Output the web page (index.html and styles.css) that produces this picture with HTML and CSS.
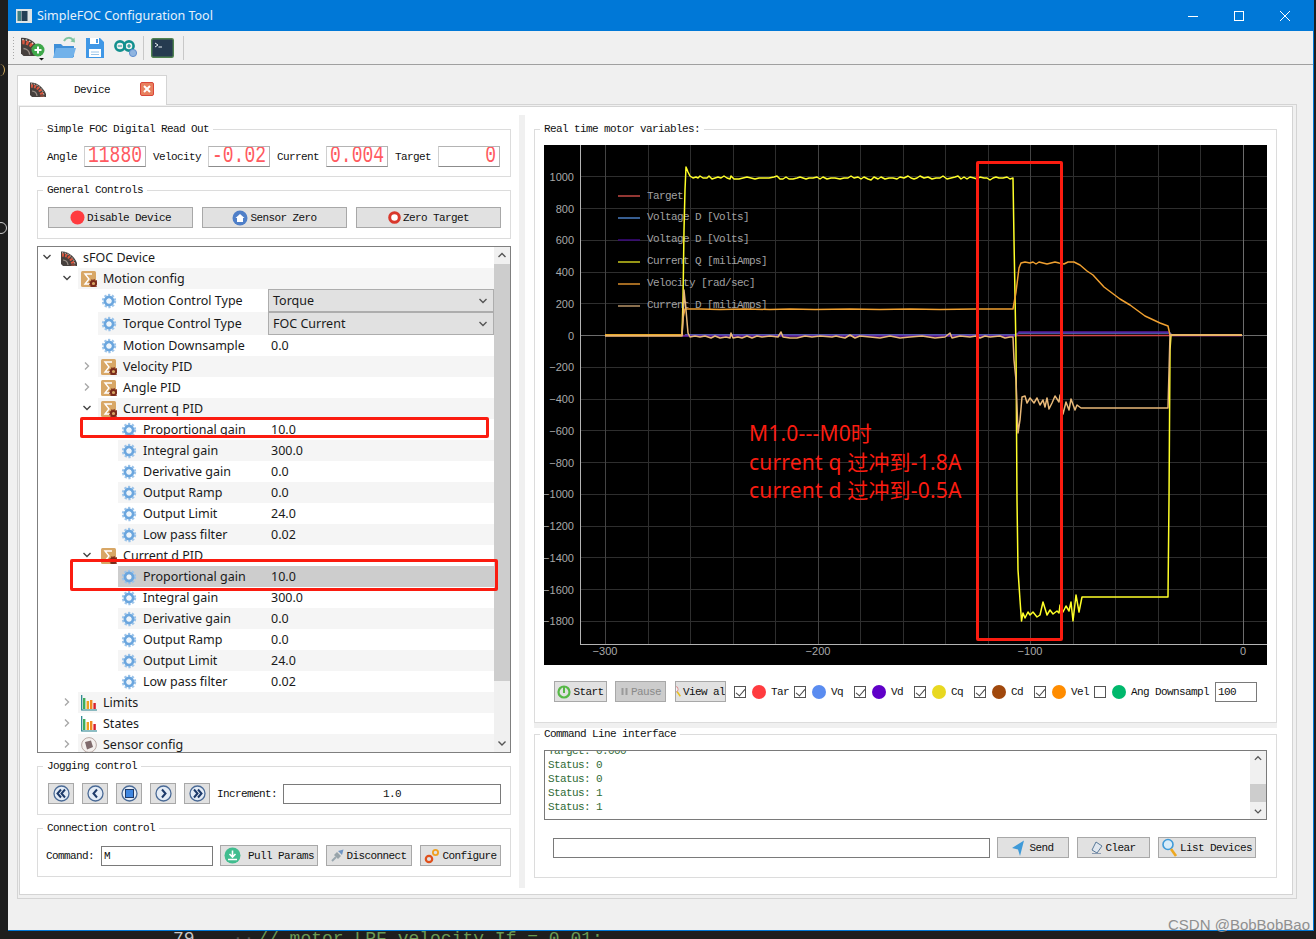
FILE: index.html

```html
<!DOCTYPE html>
<html lang="en">
<head>
  <meta charset="UTF-8">
  <meta name="viewport" content="width=device-width, initial-scale=1.0">
  <title>SimpleFOC Configuration Tool</title>
  <link rel="stylesheet" href="styles.css">
</head>
<body>
  <!-- Shared icons -->
  <svg class="defs" width="0" height="0">
    <symbol id="i-dial" viewBox="0 0 16 16">
      <path d="M0 1.5 C7 1 13 6 16 13 V16 H2 L0 14 Z" fill="#46403d"/>
      <path d="M1 5 A10.5 10.5 0 0 1 12 15.5" fill="none" stroke="#d9573f" stroke-width="3.4" stroke-dasharray="2 1.2"/>
      <path d="M1 2.8 A13 13 0 0 1 14 15.5" fill="none" stroke="#e6dcd2" stroke-width="1" stroke-dasharray="1.2 1.6"/>
      <path d="M2 10 A5.5 5.5 0 0 1 7 15" fill="none" stroke="#9a8f88" stroke-width="1.2"/>
    </symbol>
    <symbol id="i-sum" viewBox="0 0 16 16">
      <rect width="15" height="16" rx="1.5" fill="#d8a766"/>
      <polyline points="11,3 4,3 8,8 4,13 11,13" fill="none" stroke="#fff" stroke-width="1.4"/>
      <circle cx="12.5" cy="12.5" r="2.6" fill="none" stroke="#7a2a1a" stroke-width="2"/>
      <circle cx="12.5" cy="12.5" r="3.8" fill="none" stroke="#7a2a1a" stroke-width="1.2" stroke-dasharray="1.4 1.1"/>
    </symbol>
    <symbol id="i-gear" viewBox="0 0 16 16">
      <circle cx="8" cy="8" r="6" fill="none" stroke="#9cc4ea" stroke-width="2.4" stroke-dasharray="2.2 1.6"/>
      <circle cx="8" cy="8" r="4" fill="none" stroke="#6ba6de" stroke-width="2.8"/>
      <circle cx="8" cy="8" r="2.4" fill="#eef5fb"/>
    </symbol>
    <symbol id="i-bars" viewBox="0 0 16 16">
      <rect x="2" y="3" width="2.4" height="11" fill="#3fae5a"/>
      <rect x="5.6" y="6" width="2.4" height="8" fill="#f0a020"/>
      <rect x="9" y="5" width="2.4" height="9" fill="#f08a20"/>
      <rect x="12.4" y="8" width="2.4" height="6" fill="#d9202c"/>
      <path d="M.7 0 V15 H16" fill="none" stroke="#1e7f8a" stroke-width="1.2"/>
    </symbol>
    <symbol id="i-sensor" viewBox="0 0 16 16">
      <circle cx="8" cy="8" r="7.4" fill="#f4f0ee" stroke="#b8a8a4"/>
      <path d="M4 5 L10 3.5 L12 10 L6 12.5 Z" fill="#7f6a6c"/>
    </symbol>
    <symbol id="i-arrow-down" viewBox="0 0 10 10">
      <polyline points="1.5,3 5,6.5 8.5,3" fill="none" stroke="currentColor" stroke-width="1.4"/>
    </symbol>
    <symbol id="i-arrow-right" viewBox="0 0 10 10">
      <polyline points="3,1.5 6.5,5 3,8.5" fill="none" stroke="currentColor" stroke-width="1.4"/>
    </symbol>
    <symbol id="i-arrow-up" viewBox="0 0 10 10">
      <polyline points="1.5,6.5 5,3 8.5,6.5" fill="none" stroke="currentColor" stroke-width="1.4"/>
    </symbol>
  </svg>

  <div class="desktop">
    <div class="gutter">
      <div class="gutter-a"></div>
      <div class="gutter-b"></div>
    </div>

    <div class="window">
      <!-- Title bar -->
      <div class="titlebar">
        <svg class="app-icon" width="16" height="14" viewBox="0 0 16 14">
          <rect width="16" height="14" fill="#dfe5e6"/>
          <rect x="1.5" y="2" width="3.5" height="10" fill="#3f7f80"/>
          <rect x="5.5" y="2" width="6" height="10" fill="#233f55"/>
        </svg>
        <span class="app-title">SimpleFOC Configuration Tool</span>
        <div class="winbtns">
          <svg width="46" height="30" viewBox="0 0 46 30"><path d="M18 15.5 H28" stroke="#fff"/></svg>
          <svg width="46" height="30" viewBox="0 0 46 30"><rect x="18.5" y="10.5" width="9" height="9" fill="none" stroke="#fff"/></svg>
          <svg width="46" height="30" viewBox="0 0 46 30"><path d="M18 10 L28 20 M28 10 L18 20" stroke="#fff"/></svg>
        </div>
      </div>

      <!-- Toolbar -->
      <div class="toolbar">
        <div class="grip"></div>
        <svg class="tool tool-add" width="24" height="26" viewBox="0 0 24 26">
          <use href="#i-dial" width="20" height="20" y="1"/>
          <circle cx="17" cy="15" r="6.5" fill="#3fa84a"/>
          <path d="M13.5 15 H20.5 M17 11.5 V18.5" stroke="#fff" stroke-width="2"/>
          <path d="M18 23 H23 L20.5 25.5 Z" fill="#111"/>
        </svg>
        <svg class="tool" width="23" height="24" viewBox="0 0 23 24">
          <path d="M1 8 H8 L10 10 H21 V21 H1 Z" fill="#3f8fd8"/>
          <path d="M3 12 H23 L20 22 H0 Z" fill="#72b2ea"/>
          <path d="M11 5 C13 1 18 1 20 4" fill="none" stroke="#7fc4a0" stroke-width="2"/>
          <path d="M17.5 5.5 L22 6.5 L21.5 1.5 Z" fill="#7fc4a0"/>
        </svg>
        <svg class="tool tool-save" width="19" height="20" viewBox="0 0 19 20">
          <path d="M1 0 H15 L19 4 V20 H1 Z" fill="#3f97e6"/>
          <rect x="5" y="0" width="9" height="6" fill="#fff"/>
          <rect x="11" y="1" width="2" height="4" fill="#3f97e6"/>
          <rect x="4" y="11" width="12" height="8" fill="#fff"/>
          <path d="M6 14 H14 M6 16.5 H14" stroke="#9cc6ea"/>
        </svg>
        <svg class="tool tool-ino" width="24" height="20" viewBox="0 0 24 20">
          <circle cx="6" cy="8" r="4.6" fill="none" stroke="#13908e" stroke-width="2.6"/>
          <circle cx="15" cy="8" r="4.6" fill="none" stroke="#13908e" stroke-width="2.6"/>
          <path d="M3.8 8 H8 M13 8 H17 M15 6 V10" stroke="#13908e" stroke-width="1.2"/>
          <circle cx="19" cy="15" r="3.6" fill="#8fb4e0" stroke="#5f8fd0"/>
        </svg>
        <div class="tool-sep"></div>
        <svg class="tool" width="23" height="20" viewBox="0 0 23 20">
          <rect x=".7" y=".7" width="21.6" height="18.6" rx="1.5" fill="#263b50" stroke="#4f8250" stroke-width="1.4"/>
          <path d="M4 5 L7 7 L4 9 M7.5 9 H11" fill="none" stroke="#e8f0f0"/>
        </svg>
        <div class="tool-sep"></div>
      </div>

      <!-- Tabs -->
      <div class="workspace">
        <div class="tabbar">
          <div class="tab">
            <svg class="tab-icon" width="16" height="16"><use href="#i-dial"/></svg>
            <span class="tab-name">Device</span>
            <svg class="tab-close" width="14" height="14" viewBox="0 0 14 14">
              <rect x=".5" y=".5" width="13" height="13" rx="1.5" fill="#e8805e" stroke="#d9473a"/>
              <path d="M4 4 L10 10 M10 4 L4 10" stroke="#fff" stroke-width="2"/>
            </svg>
          </div>
        </div>
        <div class="pane">
          <div class="pane-inner">
            <!-- Left column -->
            <div class="left">
              <fieldset class="group group-readout">
                <legend>Simple FOC Digital Read Out</legend>
                <div class="readouts">
                  <span>Angle</span><div class="lcd"><span>11880</span></div>
                  <span>Velocity</span><div class="lcd"><span>-0.02</span></div>
                  <span>Current</span><div class="lcd"><span>0.004</span></div>
                  <span>Target</span><div class="lcd"><span>0</span></div>
                </div>
              </fieldset>

              <fieldset class="group">
                <legend>General Controls</legend>
                <div class="general">
                  <button class="btn btn-wide">
                    <svg width="15" height="15"><circle cx="7.5" cy="7.5" r="7" fill="#ff3b3f"/></svg>Disable Device
                  </button>
                  <button class="btn btn-wide">
                    <svg width="16" height="16" viewBox="0 0 16 16">
                      <circle cx="8" cy="8" r="7.5" fill="#4f7fc8"/>
                      <path d="M3.5 8 L8 4 L12.5 8 H11 V12 H5 V8 Z" fill="#fff"/>
                    </svg>Sensor Zero
                  </button>
                  <button class="btn btn-wide">
                    <svg width="13" height="13"><circle cx="6.5" cy="6.5" r="4.8" fill="#fff" stroke="#d9382c" stroke-width="3"/></svg>Zero Target
                  </button>
                </div>
              </fieldset>

              <!-- Parameter tree -->
              <div class="tree">
                <div class="tree-body">
                  <div class="row lvl0"><svg class="arrow"><use href="#i-arrow-down"/></svg><svg class="icon"><use href="#i-dial"/></svg><span class="name">sFOC Device</span></div>
                  <div class="row lvl1 alt"><svg class="arrow"><use href="#i-arrow-down"/></svg><svg class="icon"><use href="#i-sum"/></svg><span class="name">Motion config</span></div>
                  <div class="row lvl2 tall"><svg class="icon"><use href="#i-gear"/></svg><span class="name">Motion Control Type</span><div class="combo">Torque<svg class="chev"><use href="#i-arrow-down"/></svg></div></div>
                  <div class="row lvl2 tall alt"><svg class="icon"><use href="#i-gear"/></svg><span class="name">Torque Control Type</span><div class="combo">FOC Current<svg class="chev"><use href="#i-arrow-down"/></svg></div></div>
                  <div class="row lvl2"><svg class="icon"><use href="#i-gear"/></svg><span class="name">Motion Downsample</span><span class="val">0.0</span></div>
                  <div class="row lvl2 alt"><svg class="arrow light"><use href="#i-arrow-right"/></svg><svg class="icon"><use href="#i-sum"/></svg><span class="name">Velocity PID</span></div>
                  <div class="row lvl2"><svg class="arrow light"><use href="#i-arrow-right"/></svg><svg class="icon"><use href="#i-sum"/></svg><span class="name">Angle PID</span></div>
                  <div class="row lvl2 alt"><svg class="arrow"><use href="#i-arrow-down"/></svg><svg class="icon"><use href="#i-sum"/></svg><span class="name">Current q PID</span></div>
                  <div class="row lvl3"><svg class="icon"><use href="#i-gear"/></svg><span class="name">Proportional gain</span><span class="val">10.0</span></div>
                  <div class="row lvl3 alt"><svg class="icon"><use href="#i-gear"/></svg><span class="name">Integral gain</span><span class="val">300.0</span></div>
                  <div class="row lvl3"><svg class="icon"><use href="#i-gear"/></svg><span class="name">Derivative gain</span><span class="val">0.0</span></div>
                  <div class="row lvl3 alt"><svg class="icon"><use href="#i-gear"/></svg><span class="name">Output Ramp</span><span class="val">0.0</span></div>
                  <div class="row lvl3"><svg class="icon"><use href="#i-gear"/></svg><span class="name">Output Limit</span><span class="val">24.0</span></div>
                  <div class="row lvl3 alt"><svg class="icon"><use href="#i-gear"/></svg><span class="name">Low pass filter</span><span class="val">0.02</span></div>
                  <div class="row lvl2"><svg class="arrow"><use href="#i-arrow-down"/></svg><svg class="icon"><use href="#i-sum"/></svg><span class="name">Current d PID</span></div>
                  <div class="row lvl3 selected"><svg class="icon"><use href="#i-gear"/></svg><span class="name">Proportional gain</span><span class="val">10.0</span></div>
                  <div class="row lvl3"><svg class="icon"><use href="#i-gear"/></svg><span class="name">Integral gain</span><span class="val">300.0</span></div>
                  <div class="row lvl3 alt"><svg class="icon"><use href="#i-gear"/></svg><span class="name">Derivative gain</span><span class="val">0.0</span></div>
                  <div class="row lvl3"><svg class="icon"><use href="#i-gear"/></svg><span class="name">Output Ramp</span><span class="val">0.0</span></div>
                  <div class="row lvl3 alt"><svg class="icon"><use href="#i-gear"/></svg><span class="name">Output Limit</span><span class="val">24.0</span></div>
                  <div class="row lvl3"><svg class="icon"><use href="#i-gear"/></svg><span class="name">Low pass filter</span><span class="val">0.02</span></div>
                  <div class="row lvl1 alt"><svg class="arrow light"><use href="#i-arrow-right"/></svg><svg class="icon"><use href="#i-bars"/></svg><span class="name">Limits</span></div>
                  <div class="row lvl1"><svg class="arrow light"><use href="#i-arrow-right"/></svg><svg class="icon"><use href="#i-bars"/></svg><span class="name">States</span></div>
                  <div class="row lvl1 alt"><svg class="arrow light"><use href="#i-arrow-right"/></svg><svg class="icon"><use href="#i-sensor"/></svg><span class="name">Sensor config</span></div>
                </div>
                <div class="vscroll">
                  <svg class="vscroll-btn"><use href="#i-arrow-up"/></svg>
                  <div class="vscroll-track"><div class="vscroll-thumb"></div></div>
                  <svg class="vscroll-btn"><use href="#i-arrow-down"/></svg>
                </div>
              </div>

              <fieldset class="group">
                <legend>Jogging control</legend>
                <div class="jog">
                  <button class="btn btn-jog"><svg width="17" height="17" viewBox="0 0 17 17"><circle cx="8.5" cy="8.5" r="7.5" fill="#e4ecf6" stroke="#4a6a96" stroke-width="1.3"/><path d="M8 4.5 L4.5 8.5 L8 12.5 M12 4.5 L8.5 8.5 L12 12.5" fill="none" stroke="#1d3a6a" stroke-width="2"/></svg></button>
                  <button class="btn btn-jog"><svg width="17" height="17" viewBox="0 0 17 17"><circle cx="8.5" cy="8.5" r="7.5" fill="#e4ecf6" stroke="#4a6a96" stroke-width="1.3"/><path d="M10 4.5 L6.5 8.5 L10 12.5" fill="none" stroke="#1d3a6a" stroke-width="2"/></svg></button>
                  <button class="btn btn-jog"><svg width="17" height="17" viewBox="0 0 17 17"><circle cx="8.5" cy="8.5" r="7.5" fill="#e4ecf6" stroke="#4a6a96" stroke-width="1.3"/><rect x="4.5" y="4.5" width="8" height="8" fill="#3f86e0" stroke="#1d3a6a"/></svg></button>
                  <button class="btn btn-jog"><svg width="17" height="17" viewBox="0 0 17 17"><circle cx="8.5" cy="8.5" r="7.5" fill="#e4ecf6" stroke="#4a6a96" stroke-width="1.3"/><path d="M7 4.5 L10.5 8.5 L7 12.5" fill="none" stroke="#1d3a6a" stroke-width="2"/></svg></button>
                  <button class="btn btn-jog"><svg width="17" height="17" viewBox="0 0 17 17"><circle cx="8.5" cy="8.5" r="7.5" fill="#e4ecf6" stroke="#4a6a96" stroke-width="1.3"/><path d="M5 4.5 L8.5 8.5 L5 12.5 M9 4.5 L12.5 8.5 L9 12.5" fill="none" stroke="#1d3a6a" stroke-width="2"/></svg></button>
                  <span class="jog-label">Increment:</span>
                  <div class="input input-inc">1.0</div>
                </div>
              </fieldset>

              <fieldset class="group">
                <legend>Connection control</legend>
                <div class="connect">
                  <span>Command:</span>
                  <div class="input input-cmd">M</div>
                  <button class="btn btn-pull">
                    <svg width="17" height="17" viewBox="0 0 17 17"><circle cx="8.5" cy="8.5" r="8" fill="#41bd8f"/><path d="M8.5 3.5 V9 M5.5 7 L8.5 10 L11.5 7 M4 12.5 H13" fill="none" stroke="#fff" stroke-width="1.6"/></svg>
                    <span>Pull Params</span>
                  </button>
                  <button class="btn btn-disc">
                    <svg width="13" height="13" viewBox="0 0 13 13"><path d="M1 12 L5 8" stroke="#9aa8b0" stroke-width="2"/><path d="M3 6 L7 10 L10 7 L6 3 Z" fill="#98a4aa"/><path d="M7 2 L11 6 L12.5 .5 Z" fill="#6f95c4"/></svg>Disconnect
                  </button>
                  <button class="btn btn-conf">
                    <svg width="16" height="16" viewBox="0 0 16 16"><circle cx="5" cy="11" r="3.2" fill="none" stroke="#e0501c" stroke-width="2.2"/><circle cx="11.5" cy="4.5" r="2.6" fill="none" stroke="#f0a020" stroke-width="1.8"/></svg>Configure
                  </button>
                </div>
              </fieldset>
            </div>

            <div class="splitter"></div>

            <!-- Right column -->
            <div class="right">
              <fieldset class="group group-plot">
                <legend>Real time motor variables:</legend>
                <svg class="chart" width="723" height="520" viewBox="544 145 723 520">
                  <rect x="544" y="145" width="723" height="520" fill="#000"/>
                  <path class="grid" d="M580 176.5H1267M580 208.5H1267M580 240.5H1267M580 272.5H1267M580 303.5H1267M580 367.5H1267M580 399.5H1267M580 430.5H1267M580 462.5H1267M580 494.5H1267M580 526.5H1267M580 557.5H1267M580 589.5H1267M580 621.5H1267"/>
                  <path class="grid" d="M648.5 145V644M690.5 145V644M733.5 145V644M775.5 145V644M860.5 145V644M903.5 145V644M945.5 145V644M988.5 145V644M1073.5 145V644M1115.5 145V644M1158.5 145V644M1200.5 145V644"/>
                  <path class="grid-major" d="M605.5 145V644M818.5 145V644M1030.5 145V644"/>
                  <path class="grid-zero" d="M1243.5 145V644M580 335.5H1267"/>
                  <path class="axis" d="M580.5 145V644M580 644.5H1267"/>

                  <g class="tick-y">
                    <text x="574" y="181">1000</text><text x="574" y="213">800</text><text x="574" y="244">600</text>
                    <text x="574" y="276">400</text><text x="574" y="308">200</text><text x="574" y="340">0</text>
                    <text x="574" y="371">−200</text><text x="574" y="403">−400</text><text x="574" y="435">−600</text>
                    <text x="574" y="467">−800</text><text x="574" y="498">−1000</text><text x="574" y="530">−1200</text>
                    <text x="574" y="562">−1400</text><text x="574" y="594">−1600</text><text x="574" y="625">−1800</text>
                  </g>
                  <g class="tick-x">
                    <text x="605" y="655">−300</text><text x="818" y="655">−200</text><text x="1030" y="655">−100</text><text x="1243" y="655">0</text>
                  </g>

                  <!-- Legend -->
                  <path class="lg" stroke="#c44a44" d="M618 196H640"/>
                  <path class="lg" stroke="#4a7ec2" d="M618 218H640"/>
                  <path class="lg" stroke="#3c0a80" d="M618 240H640"/>
                  <path class="lg" stroke="#c8c81e" d="M618 262H640"/>
                  <path class="lg" stroke="#d88e2c" d="M618 284H640"/>
                  <path class="lg" stroke="#b89468" d="M618 306H640"/>
                  <g class="legend-text">
                    <text x="647" y="199">Target</text>
                    <text x="647" y="220">Voltage D [Volts]</text>
                    <text x="647" y="242">Voltage D [Volts]</text>
                    <text x="647" y="264">Current Q [miliAmps]</text>
                    <text x="647" y="286">Velocity [rad/sec]</text>
                    <text x="647" y="308">Current D [miliAmps]</text>
                  </g>

                  <!-- Traces -->
                  <polyline class="trace" stroke="#d0484a" points="605,335.5 1242,335.5"/>
                  <polyline class="trace" stroke="#5a6fd8" points="685,335 1015,335 1019,333 1170,333 1172,335.5"/>
                  <polyline class="trace" stroke="#5a1ea0" points="682,336 1016,336 1019,332 1168,332 1171,335.5 1242,335.5"/>
                  <polyline class="trace" stroke="#ffff28" points="605,335 682,335 683,300 684,230 685,190 686,167 688,172 690,176 693,178 696,177 698,178 700,176 703,178 707,178 709,176 712,179 715,178 718,177 721,178 724,176 727,178 730,179 731,176 734,179 739,179 743,178 747,177 751,178 755,179 759,178 764,178 769,178 774,177 777,176 780,179 783,179 786,177 789,179 793,179 797,178 800,177 803,178 806,179 809,178 813,178 817,177 820,179 823,177 827,179 831,178 835,178 840,179 844,178 848,178 851,176 854,178 858,177 861,179 864,177 868,179 871,180 874,177 878,179 881,177 885,179 889,178 893,178 897,179 900,177 904,178 908,176 911,178 914,179 917,178 920,176 924,178 928,177 932,179 936,178 940,178 943,176 947,179 951,178 955,177 958,176 961,179 964,177 967,179 970,177 974,178 977,179 980,177 984,178 987,178 990,180 993,178 996,177 999,178 1003,178 1007,177 1010,179 1013,178 1014,240 1016,350 1017,500 1018,570 1020,600 1021.5,621 1023,613 1025,618 1028,612 1030,615 1033,612 1037,617 1040,615 1043,602 1047,615 1050,610 1053,614 1057,611 1059,613 1060,605 1063,612 1066,606 1069,611 1071,602 1073,621 1076,595 1079,612 1082,597 1168,597 1169,500 1170,350 1171,335 1242,335"/>
                  <polyline class="trace" stroke="#f0a030" points="605,335 682,335 683,318 685,309 700,309 720,309.5 745,309 770,309.5 790,309 815,309.5 850,309 880,309.5 910,309 940,309.5 975,309 1013,309 1016,292 1019,268 1021,263 1025,262 1030,263 1033,262 1036,264 1039,262 1043,263 1047,264 1051,263 1055,262 1059,263 1064,264 1068,262 1074,262 1080,265 1087,271 1093,275 1104,287 1120,299 1130,305 1145,316 1160,323 1168,326 1170,335 1242,335"/>
                  <polyline class="trace" stroke="#e8b878" points="605,336 682,336 683,320 684,290 686,310 688,333 690,337 695,336 700,337 705,336 711,338 715,336 720,338 726,337 730,338 731,333 733,338 738,337 742,338 747,336 752,338 757,336 762,337 770,336 778,337 781,332 783,337 790,338 797,338 805,336 812,337 820,336 832,337 836,336 840,337 845,338 850,335 855,338 860,336 870,337 880,338 890,336 900,338 910,337 922,336 935,338 945,337 950,333 952,338 960,336 970,337 976,336 980,338 985,336 990,337 1000,336 1005,338 1010,337 1013,337 1014,360 1016,380 1018,433 1020,420 1022,397 1025,396 1027,403 1030,398 1034,403 1037,398 1040,405 1043,400 1045,407 1047,398 1049,409 1052,403 1055,396 1059,402 1060,395 1063,414 1066,402 1069,410 1071,399 1075,410 1077,405 1081,408 1168,408 1170,335 1242,335"/>
                </svg>

                <div class="plot-controls">
                  <button class="btn btn-start">
                    <svg width="14" height="14" viewBox="0 0 14 14"><circle cx="7" cy="7" r="5.5" fill="none" stroke="#56b846" stroke-width="2.2"/><path d="M7 2 V8" stroke="#56b846" stroke-width="2"/></svg>Start
                  </button>
                  <button class="btn btn-pause" disabled>
                    <svg width="9" height="9" viewBox="0 0 9 9"><path d="M2.5 1 V8 M6.5 1 V8" stroke="#9a9a9a" stroke-width="2"/></svg>Pause
                  </button>
                  <button class="btn btn-view">
                    <svg class="view-glass" width="11" height="19" viewBox="0 0 11 19"><circle cx="2" cy="6" r="4.5" fill="#f4f4f4" stroke="#d85c5c"/><path d="M5 10 L10 17" stroke="#e8c020" stroke-width="2.4"/></svg>View al
                  </button>
                  <label class="series"><span class="check on"></span><span class="dot dot-tar"></span><span>Tar</span></label>
                  <label class="series"><span class="check on"></span><span class="dot dot-vq"></span><span>Vq</span></label>
                  <label class="series"><span class="check on"></span><span class="dot dot-vd"></span><span>Vd</span></label>
                  <label class="series"><span class="check on"></span><span class="dot dot-cq"></span><span>Cq</span></label>
                  <label class="series"><span class="check on"></span><span class="dot dot-cd"></span><span>Cd</span></label>
                  <label class="series"><span class="check on"></span><span class="dot dot-vel"></span><span>Vel</span></label>
                  <label class="series"><span class="check"></span><span class="dot dot-ang"></span><span>Ang</span></label>
                  <span class="down-label">Downsampl</span>
                  <div class="input input-down">100</div>
                </div>
              </fieldset>

              <div class="hsplit"></div>

              <fieldset class="group">
                <legend>Command Line interface</legend>
                <div class="console">
                  <div class="console-text">
                    <div>Target: 0.000</div>
                    <div>Status: 0</div>
                    <div>Status: 0</div>
                    <div>Status: 1</div>
                    <div>Status: 1</div>
                  </div>
                  <div class="vscroll vscroll-small">
                    <svg class="vscroll-btn"><use href="#i-arrow-up"/></svg>
                    <div class="vscroll-track"><div class="console-thumb"></div></div>
                    <svg class="vscroll-btn"><use href="#i-arrow-down"/></svg>
                  </div>
                </div>
                <div class="send-row">
                  <div class="input input-send"></div>
                  <button class="btn btn-send">
                    <svg width="13" height="16" viewBox="0 0 13 16"><path d="M12 .5 L0 8 L6 9.5 L8 16 Z" fill="#3f9ad8"/></svg>Send
                  </button>
                  <button class="btn btn-clear">
                    <svg width="12" height="14" viewBox="0 0 12 14"><path d="M5 1 L11 5 L6 12 L1 9 Z" fill="#dfe6ee" stroke="#5a7a9a"/><path d="M1 12.5 H10" stroke="#8a9ab0"/></svg>Clear
                  </button>
                  <button class="btn btn-list">
                    <svg width="16" height="19" viewBox="0 0 16 19"><circle cx="6" cy="6.5" r="5" fill="#d8ecf8" stroke="#3f9ad8" stroke-width="1.6"/><path d="M9 11 L14 18" stroke="#eda820" stroke-width="2.6"/></svg>List Devices
                  </button>
                </div>
              </fieldset>
            </div>
          </div>
        </div>
      </div>
    </div>
  </div>

  <!-- Editor text showing below the window -->
  <div class="editor-peek"><span class="line-no">79</span><span class="code-dots">··</span><span class="code-line">// motor LPF velocity If = 0.01;</span></div>

  <!-- Red annotations drawn over the screenshot -->
  <div class="mark mark-chart"></div>
  <div class="mark mark-q"></div>
  <div class="mark mark-d"></div>
  <div class="note">M1.0---M0时<br>current q 过冲到-1.8A<br>current d 过冲到-0.5A</div>
  <div class="watermark">CSDN @BobBobBao</div>
</body>
</html>
```

FILE: styles.css

```css
* {
  box-sizing: border-box;
}

html, body {
  height: 100%;
}

body {
  margin: 0;
  position: relative;
  overflow: hidden;
  background-color: #1e1e1e;
  font-family: "Liberation Mono", "DejaVu Sans Mono", monospace;
  font-size: 11px;
  letter-spacing: -0.6px;
  color: #111;
}

.defs {
  position: absolute;
}

.desktop {
  display: flex;
  height: 931px;
}

/* Bits of the editor behind the window */
.gutter {
  width: 8px;
  overflow: hidden;
}

.gutter-a {
  width: 10px;
  height: 12px;
  margin: 64px 0 0 -5px;
  border-right: 1px solid #d8b060;
  border-radius: 50%;
}

.gutter-b {
  width: 12px;
  height: 12px;
  margin: 146px 0 0 -5px;
  border: 1px solid #ccc;
  border-radius: 50%;
}

.window {
  width: 1306px;
  display: flex;
  flex-direction: column;
  background-color: #f0f0f0;
  border-right: 1px solid #0078d7;
  border-bottom: 1px solid #0078d7;
}

/* Title bar */
.titlebar {
  height: 31px;
  flex: none;
  display: flex;
  align-items: center;
  padding-left: 8px;
  background-color: #0078d7;
  color: #e6f1fb;
  font-family: "Noto Sans", sans-serif;
  font-size: 12.5px;
  letter-spacing: 0;
}

.app-icon {
  margin-right: 5px;
}

.winbtns {
  margin-left: auto;
  margin-right: 5px;
  display: flex;
}

/* Toolbar */
.toolbar {
  height: 34px;
  flex: none;
  display: flex;
  align-items: center;
  padding-left: 4px;
  border-bottom: 1px solid #a0a0a0;
}

.grip {
  width: 3px;
  height: 24px;
  margin-right: 6px;
  background-image: radial-gradient(#a8a8a8 1px, transparent 1px);
  background-size: 3px 3px;
}

.tool {
  margin-right: 9px;
}

.tool-add {
  margin-right: 8px;
}

.tool-save {
  margin-right: 10px;
}

.tool-ino {
  margin-right: 5px;
}

.tool-sep {
  width: 1px;
  height: 24px;
  margin-right: 7px;
  background-color: #c8c8c8;
}

/* Tabs */
.workspace {
  flex: 1;
  padding: 10px 16px 31px 9px;
  display: flex;
  flex-direction: column;
}

.tabbar {
  height: 30px;
  flex: none;
  display: flex;
  margin-bottom: -1px;
}

.tab {
  width: 150px;
  display: flex;
  align-items: center;
  padding: 0 12px;
  position: relative;
  z-index: 1;
  background-color: #fff;
  border: 1px solid #d4d4d4;
  border-bottom: none;
}

.tab-icon {
  margin-top: -3px;
}

.tab-name {
  margin-left: 28px;
  margin-top: -1px;
}

.tab-close {
  margin-left: auto;
  margin-top: -3px;
}

.pane {
  flex: 1;
  display: flex;
  padding: 1px 3px 3px 1px;
  border: 1px solid #d4d4d4;
}

.pane-inner {
  flex: 1;
  display: flex;
  padding: 16px 15px 0 17px;
  background-color: #fff;
  border: 1px solid #d4d4d4;
}

/* Columns */
.left {
  width: 474px;
  flex: none;
  display: flex;
  flex-direction: column;
  gap: 7px;
}

.splitter {
  width: 6px;
  flex: none;
  margin: -8px 9px 6px 8px;
  background-color: #f0f0f0;
}

.right {
  flex: 1;
  display: flex;
  flex-direction: column;
}

/* Group boxes */
.group {
  margin: 0;
  min-width: 0;
  padding: 11px 9px 10px;
  border: 1px solid #dcdcdc;
}

.group-readout {
  padding-bottom: 9px;
}

.group legend {
  margin-left: -4px;
  padding: 0 4px;
  line-height: 12px;
}

/* Buttons and inputs */
.btn {
  height: 21px;
  padding: 0;
  display: flex;
  align-items: center;
  justify-content: center;
  gap: 2px;
  flex: none;
  font: inherit;
  letter-spacing: inherit;
  white-space: nowrap;
  color: #111;
  background-color: #e1e1e1;
  border: 1px solid #a8a8a8;
}

.input {
  height: 20px;
  padding: 0 2px;
  display: flex;
  align-items: center;
  background-color: #fff;
  border: 1px solid #7a7a7a;
}

/* Read out */
.readouts {
  display: flex;
  align-items: center;
  gap: 7px;
}

.lcd {
  width: 62px;
  height: 21px;
  padding-right: 3px;
  overflow: hidden;
  display: flex;
  justify-content: flex-end;
  align-items: center;
  border: 1px solid #b4b4b4;
  border-bottom-color: #8c8c8c;
  border-left-color: #d0d0d0;
  color: #ff5a60;
  font-size: 18px;
  line-height: 15px;
  letter-spacing: 0;
}

.lcd span {
  display: block;
  transform: scaleY(1.3);
}

.general {
  display: flex;
  gap: 9px;
  padding-left: 1px;
}

.btn-wide {
  width: 145px;
}

/* Tree */
.tree {
  height: 507px;
  flex: none;
  display: flex;
  overflow: hidden;
  border: 1px solid #7f7f7f;
}

.tree-body {
  width: 456px;
  flex: none;
  overflow: hidden;
  font-family: "Noto Sans", sans-serif;
  font-size: 12.5px;
  letter-spacing: 0;
  color: #1a1a1a;
}

.row {
  height: 21px;
  display: flex;
  align-items: center;
  padding-left: 3px;
  position: relative;
}

.row.tall {
  height: 23px;
}

.row.alt {
  background-color: #f5f5f5;
}

.row.selected {
  background-color: #cdcdcd;
}

.lvl0 {
  margin-left: 20px;
}

.lvl1 {
  margin-left: 40px;
}

.lvl2 {
  margin-left: 60px;
}

.lvl3 {
  margin-left: 80px;
}

.arrow {
  position: absolute;
  left: -16px;
  top: 5px;
  width: 10px;
  height: 10px;
  color: #444;
}

.arrow.light {
  color: #a8a8a8;
}

.icon {
  width: 16px;
  height: 16px;
  margin-right: 6px;
  flex: none;
}

.name {
  flex: 1;
  white-space: nowrap;
}

.val {
  width: 226px;
  flex: none;
  padding-left: 3px;
}

.combo {
  width: 226px;
  height: 23px;
  flex: none;
  padding: 0 5px 0 4px;
  display: flex;
  align-items: center;
  justify-content: space-between;
  background-color: #e1e1e1;
  border: 1px solid #adadad;
}

.chev {
  width: 10px;
  height: 10px;
  color: #555;
}

/* Scrollbars */
.vscroll {
  width: 16px;
  flex: none;
  display: flex;
  flex-direction: column;
  background-color: #f0f0f0;
}

.vscroll-btn {
  width: 16px;
  height: 17px;
  flex: none;
  padding: 3px;
  color: #555;
}

.vscroll-track {
  flex: 1;
  overflow: hidden;
}

.vscroll-thumb {
  height: 417px;
  background-color: #cdcdcd;
}

/* Jog and connection rows */
.jog {
  display: flex;
  align-items: center;
  gap: 8px;
  padding-left: 1px;
}

.btn-jog {
  width: 26px;
}

.jog-label {
  margin: 0 -2px 0 -1px;
}

.input-inc {
  width: 218px;
  flex: none;
  justify-content: center;
}

.connect {
  display: flex;
  align-items: center;
  margin-left: -1px;
}

.input-cmd {
  width: 112px;
  margin-left: 7px;
}

.btn-pull {
  width: 98px;
  margin-left: 7px;
  gap: 7px;
}

.btn-disc {
  width: 86px;
  margin-left: 8px;
}

.btn-conf {
  width: 81px;
  margin-left: 8px;
}

/* Chart */
.chart {
  display: block;
  margin-top: -1px;
}

.group-plot {
  padding-bottom: 20px;
}

.grid {
  stroke: #2e2e2e;
  fill: none;
}

.grid-major {
  stroke: #444;
  fill: none;
}

.grid-zero {
  stroke: #6c6c6c;
  fill: none;
}

.axis {
  stroke: #b4b4b4;
  fill: none;
}

.tick-y text, .tick-x text {
  font-family: "Liberation Sans", sans-serif;
  font-size: 11px;
  letter-spacing: 0;
  fill: #a8a8a8;
}

.tick-y text {
  text-anchor: end;
}

.tick-x text {
  text-anchor: middle;
}

.lg {
  stroke-width: 1.5;
  fill: none;
}

.legend-text text {
  fill: #a0a0a0;
}

.trace {
  fill: none;
  stroke-width: 1.5;
  stroke-linejoin: round;
}

/* Plot controls */
.plot-controls {
  margin-top: 16px;
  height: 21px;
  display: flex;
  align-items: center;
  padding-left: 10px;
}

.btn-start {
  width: 53px;
}

.btn-pause {
  width: 51px;
  margin-left: 8px;
  background-color: #cccccc;
  color: #8a8a8a;
}

.btn-view {
  width: 51px;
  margin: 0 8px 0 9px;
  overflow: hidden;
  justify-content: flex-start;
}

.view-glass {
  margin-left: -2px;
}

.series {
  width: 60px;
  flex: none;
  display: flex;
  align-items: center;
}

.check {
  width: 12px;
  height: 12px;
  flex: none;
  position: relative;
  background-color: #fff;
  border: 1px solid #555;
}

.check.on::after {
  content: "";
  position: absolute;
  left: 3px;
  top: 0;
  width: 4px;
  height: 8px;
  border: solid #444;
  border-width: 0 1px 1px 0;
  transform: rotate(40deg);
}

.dot {
  width: 14px;
  height: 14px;
  margin: 0 5px 0 6px;
  flex: none;
  border-radius: 50%;
}

.dot-tar { background-color: #ff3b3f; }
.dot-vq { background-color: #5a8cf0; }
.dot-vd { background-color: #6000c8; }
.dot-cq { background-color: #e8d820; }
.dot-cd { background-color: #a0480c; }
.dot-vel { background-color: #ff8c00; }
.dot-ang { background-color: #00b86c; }

.down-label {
  margin-left: 1px;
}

.input-down {
  width: 42px;
  margin-left: 6px;
}

.hsplit {
  height: 5px;
  flex: none;
  background-color: #f0f0f0;
}

/* Console */
.console {
  height: 70px;
  margin-top: -1px;
  display: flex;
  border: 1px solid #7a7a7a;
  overflow: hidden;
}

.console-text {
  flex: 1;
  margin-top: -7px;
  padding-left: 3px;
  line-height: 14px;
  color: #2f6b35;
}

.vscroll-small .vscroll-btn {
  height: 15px;
}

.console-thumb {
  height: 18px;
  margin-top: 18px;
  background-color: #cdcdcd;
}

.send-row {
  margin-top: 17px;
  padding: 0 0 9px 9px;
  display: flex;
  align-items: center;
}

.input-send {
  width: 437px;
}

.btn-send {
  width: 72px;
  margin-left: 7px;
  gap: 4px;
}

.btn-clear {
  width: 73px;
  margin-left: 8px;
}

.btn-list {
  width: 98px;
  margin-left: 8px;
}

/* Editor strip under the window */
.editor-peek {
  height: 8px;
  overflow: hidden;
  display: flex;
  font-size: 18px;
  line-height: 16px;
  letter-spacing: 0;
  white-space: pre;
}

.line-no {
  margin-left: 173px;
  color: #c8c8c8;
}

.code-dots {
  margin-left: 38px;
  color: #555;
}

.code-line {
  margin-left: 3px;
  color: #6a9955;
}

/* Annotations */
.mark {
  position: absolute;
  border: 3px solid #fb1c10;
  border-radius: 2px;
}

.mark-chart {
  left: 976px;
  top: 161px;
  width: 87px;
  height: 480px;
}

.mark-q {
  left: 80px;
  top: 417px;
  width: 409px;
  height: 21px;
}

.mark-d {
  left: 70px;
  top: 559px;
  width: 428px;
  height: 32px;
}

.note {
  position: absolute;
  left: 749px;
  top: 419px;
  color: #fb1c10;
  font-family: "Noto Sans", "Noto Sans CJK SC", sans-serif;
  font-size: 21px;
  line-height: 28.5px;
  letter-spacing: 0.2px;
  white-space: nowrap;
}

.watermark {
  position: absolute;
  right: 6px;
  top: 916px;
  color: #8f8f8f;
  font-family: "Liberation Sans", sans-serif;
  font-size: 15px;
  letter-spacing: 0;
}
```
